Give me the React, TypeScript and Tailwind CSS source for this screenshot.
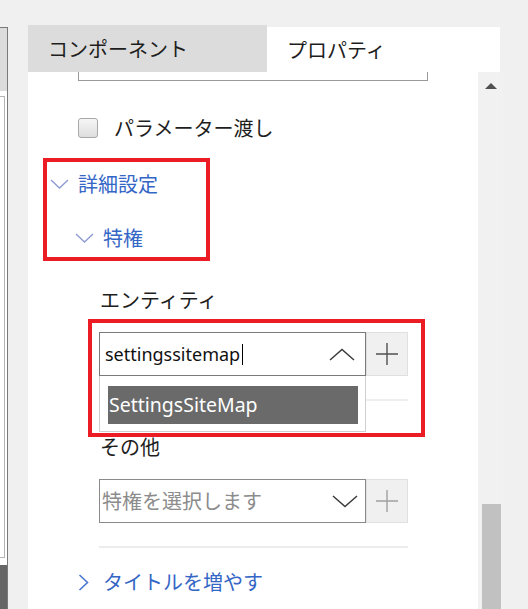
import React from "react";

const jp = "font-['Noto_Sans_CJK_JP',sans-serif]";
const latin = "font-['Noto_Sans','Noto_Sans_CJK_JP',sans-serif]";

const ChevronDown = ({ className = "" }: { className?: string }) => (
  <svg width="19" height="10" viewBox="0 0 19 10" className={className}>
    <path d="M1 1 L9.5 9 L18 1" fill="none" stroke="currentColor" strokeWidth="1.3" />
  </svg>
);

const ChevronRight = () => (
  <svg width="11" height="17" viewBox="0 0 11 17" className="text-[#4a78cf]">
    <path d="M1.5 1 L9.5 8.5 L1.5 16" fill="none" stroke="currentColor" strokeWidth="1.6" />
  </svg>
);

const SelectChevron = ({ up }: { up?: boolean }) => (
  <svg width="26" height="13" viewBox="0 0 26 13">
    <path
      d={up ? "M1 12 L13 1.5 L25 12" : "M1 1 L13 11.5 L25 1"}
      fill="none"
      stroke="#3c3c3c"
      strokeWidth="1.5"
    />
  </svg>
);

const Plus = ({ color }: { color: string }) => (
  <svg width="22" height="22" viewBox="0 0 22 22">
    <path d="M11 0 V22 M0 11 H22" stroke={color} strokeWidth="1.4" />
  </svg>
);

export default function App() {
  return (
    <div className="w-[528px] h-[609px] bg-[#f0f0f0] flex overflow-hidden">
      {/* left collapsed pane */}
      <div className="w-[8px] mt-[27px] flex flex-col border-t border-r border-[#7a7a7a]">
        <div className="h-[63px] bg-[#dcdcdc]" />
        <div className="flex-1 bg-white pt-[5px]">
          <div className="h-[462px] border border-l-0 border-[#b4b4b4] mr-[2px]" />
        </div>
        <div className="h-[44px] bg-[#666666]" />
      </div>

      {/* properties pane */}
      <div className="ml-[20px] w-[475px] mt-[25px] flex flex-col">
        <div className={`flex h-[47px] ${jp} text-[20px] text-[#1e1e1e]`}>
          <div className="w-[239px] bg-[#dcdcdc] flex items-center pl-[20px]">コンポーネント</div>
          <div className="flex-1 bg-white mt-[2px] mr-[3px] flex items-center pl-[20px]">プロパティ</div>
        </div>

        <div className="flex flex-1">
          <div className="relative w-[450px] bg-white flex flex-col">
            {/* bottom of previous text box */}
            <div className="ml-[50px] w-[350px] h-[9px] border border-t-0 border-[#9a9a9a]" />

            <div className="mt-[27px] h-[40px] flex items-center pl-[50px]">
              <div className="w-[20px] h-[20px] rounded-[3px] border border-[#a8a8a8] bg-gradient-to-b from-[#f6f6f6] to-[#dedede]" />
              <span className={`ml-[16px] ${jp} text-[20px] text-[#1e1e1e] leading-none`}>パラメーター渡し</span>
            </div>

            <div className="mt-[16px] h-[40px] flex items-center pl-[22px]">
              <ChevronDown className="text-[#8c9ad2]" />
              <span className={`ml-[9px] ${jp} text-[20px] text-[#3466c6] leading-none`}>詳細設定</span>
            </div>

            <div className="mt-[14px] h-[40px] flex items-center pl-[47px]">
              <ChevronDown className="text-[#8c9ad2]" />
              <span className={`ml-[9px] ${jp} text-[20px] text-[#3466c6] leading-none`}>特権</span>
            </div>

            <div className={`mt-[24px] h-[36px] flex items-center pl-[72px] ${jp} text-[20px] text-[#1e1e1e] leading-none`}>
              エンティティ
            </div>

            <div className="relative mt-[14px] h-[44px] flex pl-[71px]">
              <div className="w-[267px] border border-[#7a7a7a] flex items-center pl-[5px] pr-[10px]">
                <span className={`${latin} text-[18px] text-[#111] leading-none`}>settingssitemap</span>
                <span className="w-[1px] h-[21px] bg-black ml-[2px]" />
                <span className="ml-auto">
                  <SelectChevron up />
                </span>
              </div>
              <div className="w-[42px] bg-[#f0f0f0] border border-[#e0e0e0] flex items-center justify-center">
                <Plus color="#505050" />
              </div>
              <div className="absolute left-[338px] top-[67px] w-[42px] h-[2px] bg-[#efefef]" />
            </div>

            <div className={`mt-[54px] h-[34px] flex items-center pl-[72px] ${jp} text-[20px] text-[#1e1e1e] leading-none`}>
              その他
            </div>

            <div className="mt-[15px] h-[44px] flex pl-[71px]">
              <div className="w-[267px] border border-[#8a8a8a] flex items-center pl-[2px] pr-[7px]">
                <span className={`${jp} text-[20px] text-[#8c8c8c] leading-none`}>特権を選択します</span>
                <span className="ml-auto">
                  <SelectChevron />
                </span>
              </div>
              <div className="w-[42px] bg-[#f0f0f0] border border-[#e0e0e0] flex items-center justify-center">
                <Plus color="#a0a0a0" />
              </div>
            </div>

            <div className="mt-[23px] ml-[71px] w-[309px] h-[2px] bg-[#ececec]" />

            <div className="mt-[16px] h-[36px] flex items-center pl-[50px]">
              <ChevronRight />
              <span className={`ml-[14px] ${jp} text-[20px] text-[#3466c6] leading-none`}>タイトルを増やす</span>
            </div>

            {/* open dropdown list */}
            <div className="absolute left-[71px] top-[304px] w-[267px] h-[56px] bg-white border border-t-0 border-[#cfcfcf] pl-[8px] pr-[7px] pt-[10px]">
              <div className={`h-[38px] bg-[#6a6a6a] flex items-center pl-[1px] ${latin} text-[19.5px] text-white leading-none`}>
                SettingsSiteMap
              </div>
            </div>

            {/* annotation boxes */}
            <div className="absolute left-[15px] top-[86px] w-[167px] h-[103px] border-4 border-[#ec1c24]" />
            <div className="absolute left-[60px] top-[247px] w-[337px] h-[118px] border-4 border-[#ec1c24]" />
          </div>

          {/* scrollbar */}
          <div className="w-[25px] bg-[#f1f1f1] flex flex-col items-center pl-[1px]">
            <div className="mt-[11px] w-0 h-0 border-l-[6px] border-r-[6px] border-b-[6px] border-l-transparent border-r-transparent border-b-[#505050]" />
            <div className="mt-auto w-[19px] h-[105px] bg-[#c1c1c1]" />
          </div>
        </div>
      </div>
    </div>
  );
}
